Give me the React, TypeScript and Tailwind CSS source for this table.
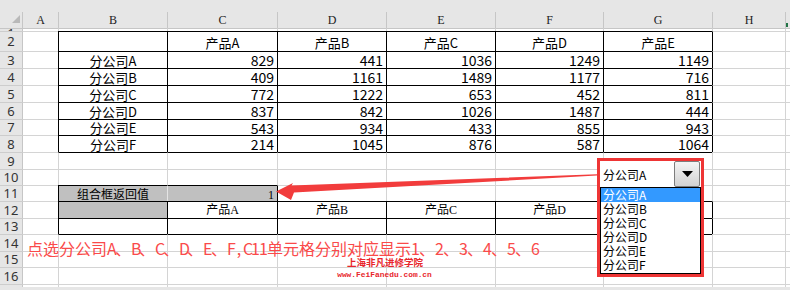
import React from 'react';

const products = ['产品A', '产品B', '产品C', '产品D', '产品E'];
const rowsData: [string, number[]][] = [
  ['分公司A', [829, 441, 1036, 1249, 1149]],
  ['分公司B', [409, 1161, 1489, 1177, 716]],
  ['分公司C', [772, 1222, 653, 452, 811]],
  ['分公司D', [837, 842, 1026, 1487, 444]],
  ['分公司E', [543, 934, 433, 855, 943]],
  ['分公司F', [214, 1045, 876, 587, 1064]],
];
const colLetters = ['A', 'B', 'C', 'D', 'E', 'F', 'G', 'H', ''];
const sheetRows = [1, 2, 3, 4, 5, 6, 7, 8, 9, 10, 11, 12, 13, 14, 15, 16, 17];

type Kind = 'cn' | 'num' | 'song';
type CellInfo = { text?: string; kind?: Kind; align?: 'center' | 'right'; gray?: boolean; pad?: boolean };

const kindCls: Record<Kind, string> = {
  cn: "font-['Noto_Sans_CJK_SC',sans-serif] text-[13px] text-black",
  num: "font-['Noto_Sans_CJK_SC',sans-serif] text-[14px] text-black",
  song: "font-['Liberation_Serif','Noto_Sans_CJK_SC',serif] text-[12px] text-black",
};

function inRegion(r: number, c: number) {
  if (r >= 2 && r <= 8 && c >= 1 && c <= 6) return true;
  if (r >= 12 && r <= 13 && c >= 1 && c <= 6) return true;
  if (r === 11 && (c === 1 || c === 2)) return true;
  return false;
}

function content(r: number, c: number): CellInfo {
  if (r === 2 && c >= 2 && c <= 6) return { text: products[c - 2], kind: 'cn', align: 'center', pad: true };
  if (r >= 3 && r <= 8) {
    const d = rowsData[r - 3];
    if (c === 1) return { text: d[0], kind: 'cn', align: 'center' };
    if (c >= 2 && c <= 6) return { text: String(d[1][c - 2]), kind: 'num', align: 'right' };
  }
  if (r === 11 && c === 1) return { text: '组合框返回值', kind: 'song', align: 'center', gray: true, pad: true };
  if (r === 11 && c === 2) return { text: '1', kind: 'song', align: 'right', gray: true, pad: true };
  if (r === 12 && c === 1) return { gray: true };
  if (r === 12 && c >= 2 && c <= 6) return { text: products[c - 2], kind: 'song', align: 'center' };
  return {};
}

function Cell({ r, c }: { r: number; c: number }) {
  const info = content(r, c);
  const topBlack = inRegion(r, c) || inRegion(r - 1, c);
  let leftCls = 'border-l-[#d4d4d4]';
  if (c === 0) leftCls = 'border-l-[#c6c6c6]';
  else if (r === 11 && c === 2) leftCls = 'border-l-[#e4e4e4]';
  else if (inRegion(r, c) || inRegion(r, c - 1)) leftCls = 'border-l-black';
  let topCls = topBlack ? 'border-t-black' : 'border-t-[#d4d4d4]';
  if (r === 1 && !topBlack) topCls = 'border-t-[#c6c6c6]';
  const alignCls = info.align === 'right' ? 'justify-end pr-[3px]' : 'justify-center';
  return (
    <div
      className={`flex items-center whitespace-nowrap leading-none border-t border-l ${topCls} ${leftCls} ${
        info.gray ? 'bg-[#c0c0c0]' : 'bg-white'
      } ${alignCls} ${info.pad ? 'pt-[2px]' : ''} ${info.kind ? kindCls[info.kind] : ''}`}
    >
      {info.text}
    </div>
  );
}

function RowHeader({ r }: { r: number }) {
  const align = r === 1 ? 'items-end' : r === 17 ? 'items-start' : 'items-center';
  return (
    <div
      className={`flex justify-center leading-none bg-[#e6e6e6] border-t ${
        r === 1 || r === 17 ? 'overflow-hidden' : ''
      } ${r === 1 ? 'border-t-[#c6c6c6]' : 'border-t-[#cdcdcd]'} ${align} font-['Noto_Sans',sans-serif] text-[13px] text-[#333]`}
    >
      <span className={r === 1 ? 'translate-y-[9px]' : r === 17 ? 'pt-[1px]' : ''}>{r}</span>
    </div>
  );
}

const redText = '点选分公司A、B、C、D、E、F,C11单元格分别对应显示1、2、3、4、5、6';

export default function App() {
  return (
    <div className="relative w-[790px] h-[290px] overflow-hidden bg-white">
      <div className="h-[12px] bg-[#e6e6e6]" />
      <div className="grid grid-cols-[22px_36px_109px_110px_109px_109px_108px_109px_73px_5px] grid-rows-[16px_3px_20px_17px_17px_17px_17px_16px_17px_17px_16px_16px_17px_16px_17px_16px_17px_3px]">
        {/* corner */}
        <div className="flex items-end justify-end pr-[2px] pb-[5px] bg-[#e6e6e6]">
          <svg width="8" height="8" viewBox="0 0 8 8">
            <polygon points="8,0 8,8 0,8" fill="#b9b9b9" />
          </svg>
        </div>
        {colLetters.map((l, i) => (
          <div
            key={'h' + i}
            className="relative flex items-center justify-center bg-[#e6e6e6] border-l border-l-[#c6c6c6] font-['Liberation_Serif',serif] text-[12px] text-[#222] leading-none"
          >
            {l}
            {i === 8 && <div className="absolute left-0 bottom-[1px] w-[2px] h-[4px] bg-[#217346]" />}
          </div>
        ))}
        {sheetRows.map((r) => (
          <React.Fragment key={'r' + r}>
            <RowHeader r={r} />
            {[0, 1, 2, 3, 4, 5, 6, 7, 8].map((c) => (
              <Cell key={r + '-' + c} r={r} c={c} />
            ))}
          </React.Fragment>
        ))}
      </div>
      <div className="h-[3px] bg-[#e6e6e6]" />

      {/* red annotation text */}
      <div className="absolute left-[27px] top-[240px] flex leading-none text-[16px] text-[#fa4a4a] font-['Noto_Sans_CJK_SC',sans-serif]">
        {Array.from(redText).map((ch, i) => (
          <span
            key={i}
            className={`inline-block text-center ${ch.charCodeAt(0) < 128 ? 'w-[8px]' : 'w-[16px]'}`}
          >
            {ch}
          </span>
        ))}
      </div>

      {/* watermark */}
      <div className="absolute left-[347px] top-[258px] w-[76px] text-center leading-none text-[9.5px] font-bold text-[#e8262c] font-['Noto_Sans_CJK_SC',sans-serif] whitespace-nowrap">
        上海非凡进修学院
      </div>
      <div className="absolute left-[337px] top-[271px] w-[95px] text-center leading-none text-[7.9px] font-bold text-[#e8262c] font-['Liberation_Mono',monospace] whitespace-nowrap">
        www.FeiFanedu.com.cn
      </div>

      {/* arrow */}
      <svg className="absolute left-0 top-0 pointer-events-none" width="790" height="290" viewBox="0 0 790 290">
        <polygon
          points="276,191.5 293,183 291.5,185.5 597,174.2 597,175.6 294,192.5 291,200"
          fill="#f23c3c"
        />
      </svg>

      {/* combo box with dropdown list */}
      <div className="absolute left-[597px] top-[158px] w-[107px] h-[119px] border-[3px] border-[#ee3535] bg-white flex flex-col">
        <div className="h-[26px] flex items-center">
          <div className="flex-1 pl-[3px] pt-[1px] text-[12px] leading-none text-black font-['Noto_Sans_CJK_SC',sans-serif]">
            分公司A
          </div>
          <div className="mr-[1px] w-[26px] h-[26px] flex items-center justify-center border border-[#7d7d7d] rounded-[2px] bg-gradient-to-b from-[#f4f4f4] to-[#d2d2d2]">
            <svg width="11" height="6" viewBox="0 0 11 6">
              <polygon points="0,0 11,0 5.5,6" fill="#000" />
            </svg>
          </div>
        </div>
        <div className="h-[87px] border border-black flex flex-col font-['Noto_Sans_CJK_SC',sans-serif] text-[12px] leading-none">
          {['分公司A', '分公司B', '分公司C', '分公司D', '分公司E', '分公司F'].map((t, i) => (
            <div
              key={t}
              className={`h-[14px] flex items-center pl-[2px] ${i === 0 ? 'bg-[#3399ff] text-white' : 'text-black'}`}
            >
              {t}
            </div>
          ))}
        </div>
      </div>
    </div>
  );
}
